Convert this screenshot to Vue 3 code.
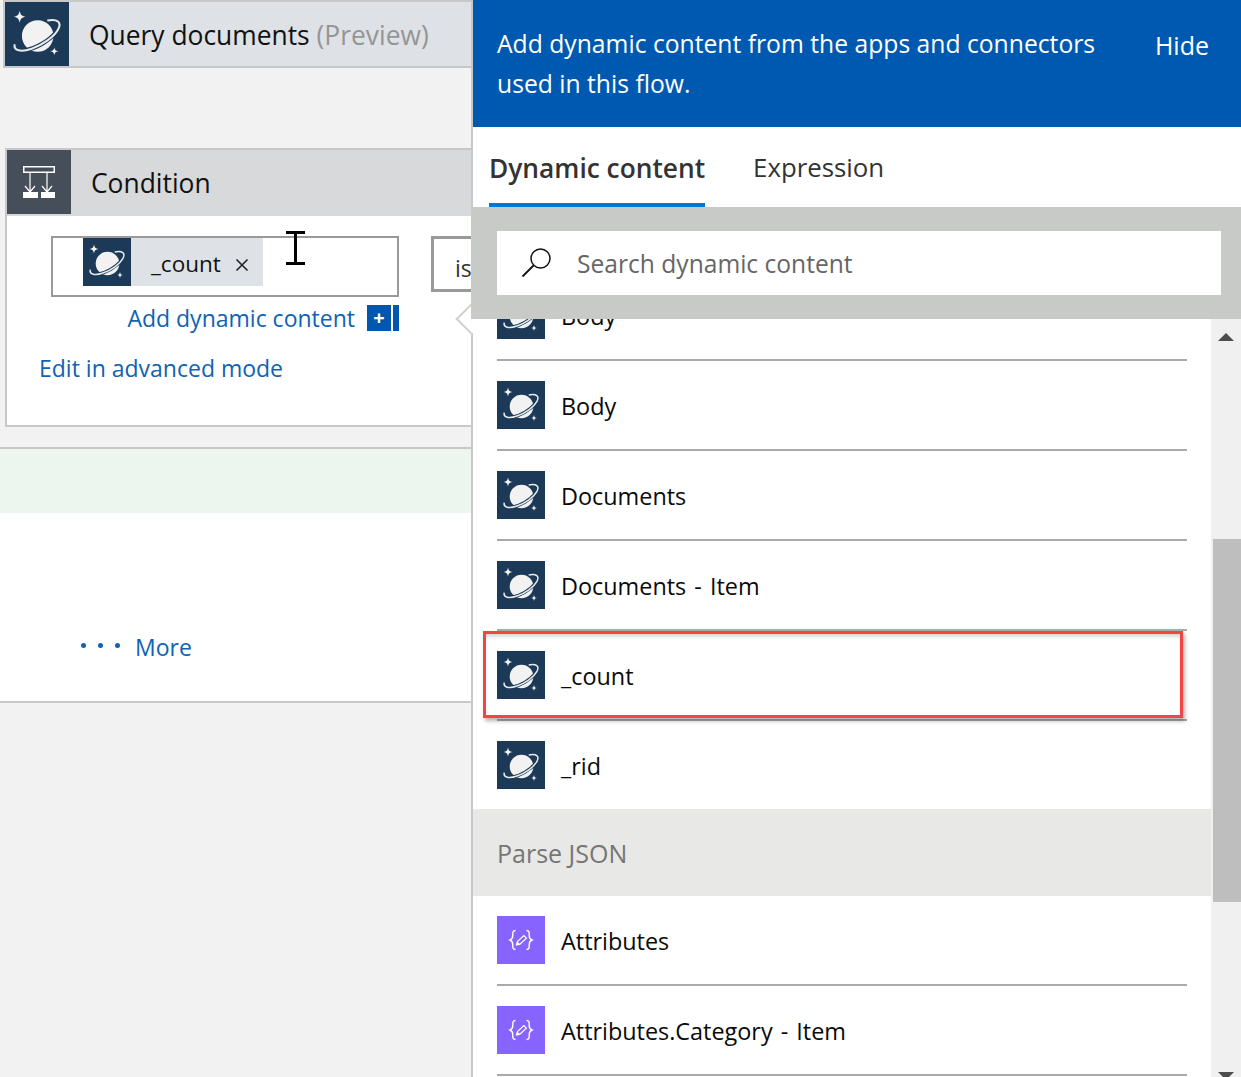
<script setup>
const cosmosRows = [
  { id: "body-top", label: "Body" },
  { id: "body", label: "Body" },
  { id: "documents", label: "Documents" },
  { id: "documents-item", label: "Documents - Item" },
  { id: "count", label: "_count", marked: true },
  { id: "rid", label: "_rid", last: true },
];

const jsonRows = [
  { id: "attributes", label: "Attributes" },
  { id: "category", label: "Attributes.Category - Item" },
];
</script>

<template>
  <div class="page">
    <svg class="icon-defs" width="0" height="0">
      <symbol id="planet" viewBox="0 0 48 48">
        <rect width="48" height="48" fill="#1c3a57" />
        <path d="M11 6.500c.7 3.200 1.300 3.800 4.500 4.500-3.200.7-3.800 1.300-4.500 4.500-.7-3.200-1.300-3.800-4.500-4.500 3.200-.7 3.800-1.300 4.500-4.500z" fill="#f2f2f2" />
        <path d="M37 34c.4 2.100.9 2.600 3 3-2.100.4-2.600.9-3 3-.4-2.100-.9-2.600-3-3 2.100-.4 2.600-.9 3-3z" fill="#f2f2f2" />
        <circle cx="24.500" cy="25.500" r="11.800" fill="#f2f2f2" />
        <path d="M40.450 15.500A19 7.500 -30 0 1 7.550 34.500" fill="none" stroke="#1c3a57" stroke-width="3.200" />
        <path d="M31.700 13.900A19 7.500 -30 1 1 7.260 31.700" fill="none" stroke="#e8ebee" stroke-width="1.500" />
      </symbol>
      <symbol id="braces" viewBox="0 0 48 48">
        <rect width="48" height="48" fill="#8764ff" />
        <path d="M18.500 14.500c-3.200 0-2.700 2.500-2.700 4.700s-.4 3.800-2.800 4.800c2.400 1 2.800 2.600 2.800 4.800s-.5 4.700 2.700 4.700M29.500 14.500c3.200 0 2.700 2.500 2.700 4.700s.4 3.800 2.800 4.800c-2.400 1-2.800 2.600-2.800 4.800s.5 4.700-2.700 4.700" fill="none" stroke="#fff" stroke-width="1.400" />
        <path d="M19.500 29l.9-3.400 6.500-6 2.500 2.600-6.500 6z" fill="none" stroke="#fff" stroke-width="1.200" />
        <path d="M19.500 29l.9-3.400 2.600 2.600z" fill="#fff" />
      </symbol>
    </svg>

    <main class="canvas">
      <section class="card card-query">
        <div class="card-head head-query">
          <svg class="card-icon"><use href="#planet" /></svg>
          <h2 class="card-title">Query documents <span class="preview">(Preview)</span></h2>
        </div>
      </section>

      <section class="card card-condition">
        <div class="card-head head-condition">
          <div class="condition-icon">
            <svg width="32" height="32" viewBox="0 0 32 32" fill="none" stroke="#fff">
              <rect x="0.750" y="0.750" width="30.500" height="5.500" stroke-width="1.500" />
              <path d="M7 7v19M24 7v19M2 20l5 6 5-6M19 20l5 6 5-6" stroke-width="1.200" />
              <rect x="0" y="26" width="15" height="6" fill="#fff" stroke="none" />
              <rect x="18" y="26" width="14" height="6" fill="#fff" stroke="none" />
            </svg>
          </div>
          <h2 class="card-title">Condition</h2>
        </div>
        <div class="condition-body">
          <div class="condition-row">
            <div class="token-input">
              <div class="token">
                <svg class="token-icon"><use href="#planet" /></svg>
                <span class="token-label">_count</span>
                <svg class="token-close" width="14" height="14" viewBox="0 0 14 14" stroke="#222" stroke-width="1.600">
                  <path d="M1.500 1.500l11 11M12.500 1.500l-11 11" />
                </svg>
              </div>
              <span class="text-cursor"></span>
            </div>
            <div class="operator">is</div>
          </div>
          <div class="add-row">
            <a class="link">Add dynamic content</a>
            <span class="add-button">+</span>
            <span class="add-tail"></span>
          </div>
          <a class="link advanced">Edit in advanced mode</a>
        </div>
      </section>

      <section class="branch">
        <div class="branch-band"></div>
        <div class="branch-body">
          <span class="dots">
            <i></i><i></i><i></i>
          </span>
          <a class="link">More</a>
        </div>
      </section>
    </main>

    <aside class="panel">
      <span class="callout"></span>
      <header class="panel-head">
        <p>Add dynamic content from the apps and connectors used in this flow.</p>
        <span class="hide">Hide</span>
      </header>

      <nav class="tabs">
        <span class="tab tab-active">Dynamic content</span>
        <span class="tab">Expression</span>
      </nav>

      <div class="search-band">
        <div class="search-box">
          <svg width="36" height="36" viewBox="0 0 36 36" fill="none" stroke="#111" stroke-width="1.500">
            <circle cx="21.500" cy="13.500" r="9.500" />
            <path d="M14.500 20.500L3.500 31.500" stroke-width="1.800" />
          </svg>
          <span>Search dynamic content</span>
        </div>
      </div>

      <div class="results">
        <div class="list">
          <div
            v-for="row in cosmosRows"
            :key="row.id"
            class="row"
            :class="{ 'row-last': row.last }"
          >
            <svg class="row-icon"><use href="#planet" /></svg>
            <span class="row-label">{{ row.label }}</span>
            <span v-if="row.marked" class="marker"></span>
          </div>

          <div class="group">Parse JSON</div>

          <div v-for="row in jsonRows" :key="row.id" class="row">
            <svg class="row-icon"><use href="#braces" /></svg>
            <span class="row-label">{{ row.label }}</span>
          </div>
        </div>

        <div class="scrollbar">
          <span class="arrow arrow-up"></span>
          <span class="thumb"></span>
          <span class="arrow arrow-down"></span>
        </div>
      </div>
    </aside>
  </div>
</template>

<style scoped>
.page {
  display: flex;
  width: 1241px;
  height: 1077px;
  overflow: hidden;
  background: #f2f2f2;
  color: #111;
  font-family: "Open Sans", "Noto Sans", sans-serif;
}

.icon-defs {
  position: absolute;
}

.canvas {
  width: 471px;
  flex: none;
  display: flex;
  flex-direction: column;
}

.card {
  border: 2px solid #c8c8c8;
  border-right: 0;
}

.card-query {
  margin-left: 3px;
  height: 68px;
  box-sizing: border-box;
}

.card-condition {
  margin: 80px 0 0 5px;
  height: 279px;
  box-sizing: border-box;
  display: flex;
  flex-direction: column;
}

.card-head {
  display: flex;
  align-items: flex-start;
  flex: none;
}

.head-query {
  height: 64px;
  background: #dee2e6;
}

.head-condition {
  height: 66px;
  background: #d8d9db;
}

.card-icon {
  width: 64px;
  height: 64px;
  flex: none;
}

.condition-icon {
  width: 64px;
  height: 64px;
  flex: none;
  background: #464e5a;
  display: flex;
  align-items: center;
  justify-content: center;
}

.card-title {
  margin: 0 0 0 20px;
  font-size: 26.400px;
  line-height: 66px;
  font-weight: 400;
  color: #111;
  white-space: nowrap;
}

.preview {
  color: #959595;
}

.condition-body {
  flex: 1;
  background: #fff;
  padding: 20px 0 0 44px;
  display: flex;
  flex-direction: column;
}

.condition-row {
  display: flex;
  gap: 32px;
}

.token-input {
  position: relative;
  width: 348px;
  height: 61px;
  box-sizing: border-box;
  border: 2px solid #999;
  background: #fff;
  padding-left: 30px;
  flex: none;
}

.token {
  display: flex;
  align-items: center;
  width: 180px;
  height: 48px;
  background: #dee2e6;
}

.token-icon {
  width: 48px;
  height: 48px;
  flex: none;
}

.token-label {
  margin: 2px 0 0 20px;
  font-size: 22.500px;
}

.token-close {
  margin: 6px 0 0 14px;
}

.text-cursor {
  position: absolute;
  left: 241px;
  top: -7px;
  width: 3px;
  height: 34px;
  background: #000;
}

.text-cursor::before,
.text-cursor::after {
  content: "";
  position: absolute;
  left: -8px;
  width: 19px;
  height: 3px;
  background: #000;
}

.text-cursor::before {
  top: 0;
}

.text-cursor::after {
  bottom: 0;
}

.operator {
  width: 60px;
  height: 56px;
  box-sizing: border-box;
  border: 3px solid #999;
  padding: 13px 0 0 21px;
  font-size: 23px;
  color: #333;
  flex: none;
}

.add-row {
  display: flex;
  align-items: center;
  justify-content: flex-end;
  width: 348px;
  height: 26px;
  margin-top: 8px;
}

.link {
  color: #0f62b4;
  font-size: 23px;
  white-space: nowrap;
}

.add-button {
  width: 24px;
  height: 26px;
  margin-left: 12px;
  background: #0057ad;
  color: #fff;
  font-size: 20px;
  font-weight: 700;
  line-height: 25px;
  text-align: center;
}

.add-tail {
  width: 6px;
  height: 26px;
  margin-left: 2px;
  background: #0057ad;
}

.advanced {
  margin: 21px 0 0 -12px;
}

.branch {
  margin-top: 20px;
  height: 256px;
  box-sizing: border-box;
  border-top: 2px solid #c8c8c8;
  border-bottom: 2px solid #c8c8c8;
  background: #fff;
}

.branch-band {
  height: 64px;
  background: #edf6ee;
}

.branch-body {
  display: flex;
  align-items: center;
  padding: 118px 0 0 81px;
}

.dots {
  display: flex;
  gap: 12px;
  margin-right: 15px;
  margin-top: -3px;
}

.dots i {
  width: 5px;
  height: 5px;
  border-radius: 50%;
  background: #0f62b4;
}

.panel {
  position: relative;
  flex: 1;
  display: flex;
  flex-direction: column;
  border-left: 2px solid #c8c8c8;
  background: #fff;
  min-width: 0;
}

.callout {
  position: absolute;
  left: -13px;
  top: 308px;
  width: 22px;
  height: 22px;
  background: #fff;
  border-left: 2px solid #d0d0d0;
  border-bottom: 2px solid #d0d0d0;
  box-sizing: border-box;
  transform: rotate(45deg);
}

.panel-head {
  flex: none;
  height: 127px;
  box-sizing: border-box;
  background: #0059b0;
  color: #fff;
  display: flex;
  justify-content: space-between;
  padding: 24px 32px 0 24px;
  font-size: 24.700px;
  line-height: 40px;
}

.panel-head p {
  margin: 0;
  width: 610px;
}

.hide {
  margin-top: 1px;
  font-size: 25px;
  line-height: 40px;
}

.tabs {
  flex: none;
  height: 80px;
  display: flex;
  gap: 48px;
  padding-left: 16px;
}

.tab {
  height: 80px;
  box-sizing: border-box;
  padding-top: 22px;
  font-size: 25.800px;
  color: #333;
  white-space: nowrap;
}

.tab-active {
  padding-top: 23px;
  font-size: 26.300px;
  font-weight: 600;
  border-bottom: 4px solid #0078d7;
}

.search-band {
  flex: none;
  height: 112px;
  box-sizing: border-box;
  background: #c8cac7;
  margin-left: -2px;
  padding: 24px 20px 24px 26px;
  position: relative;
}

.search-box {
  height: 64px;
  display: flex;
  align-items: center;
  gap: 22px;
  padding-left: 22px;
  background: #fff;
  color: #666;
  font-size: 24.600px;
}

.results {
  flex: 1;
  min-height: 0;
  display: flex;
  overflow: hidden;
}

.list {
  flex: 1;
  min-width: 0;
  margin-top: -48px;
}

.row {
  position: relative;
  height: 90px;
  box-sizing: border-box;
  margin: 0 24px;
  border-bottom: 2px solid #aaa;
  display: flex;
  align-items: center;
  gap: 16px;
  font-size: 23.400px;
  word-spacing: 2px;
  color: #0a0a0a;
}

.row-last {
  border-bottom: 0;
  height: 88px;
}

.row-label {
  margin-top: 2px;
}

.row-icon {
  width: 48px;
  height: 48px;
  flex: none;
}

.marker {
  position: absolute;
  left: -14px;
  right: 4px;
  top: 0;
  bottom: 1px;
  border: 3px solid #f44444;
  box-shadow: 2px 3px 4px rgba(0, 0, 0, 0.3), inset 0 4px 4px -2px rgba(0, 0, 0, 0.2);
}

.group {
  height: 87px;
  background: #e8e9e6;
  display: flex;
  align-items: center;
  padding-left: 24px;
  font-size: 25px;
  color: #767676;
}

.scrollbar {
  position: relative;
  width: 30px;
  flex: none;
  background: #f0f0f0;
}

.thumb {
  position: absolute;
  left: 2px;
  right: 0;
  top: 220px;
  height: 363px;
  background: #bebebe;
}

.arrow {
  position: absolute;
  left: 7px;
  width: 0;
  height: 0;
  border-left: 8px solid transparent;
  border-right: 8px solid transparent;
}

.arrow-up {
  top: 14px;
  border-bottom: 8px solid #4d4d4d;
}

.arrow-down {
  bottom: -3px;
  border-top: 8px solid #4d4d4d;
}
</style>
